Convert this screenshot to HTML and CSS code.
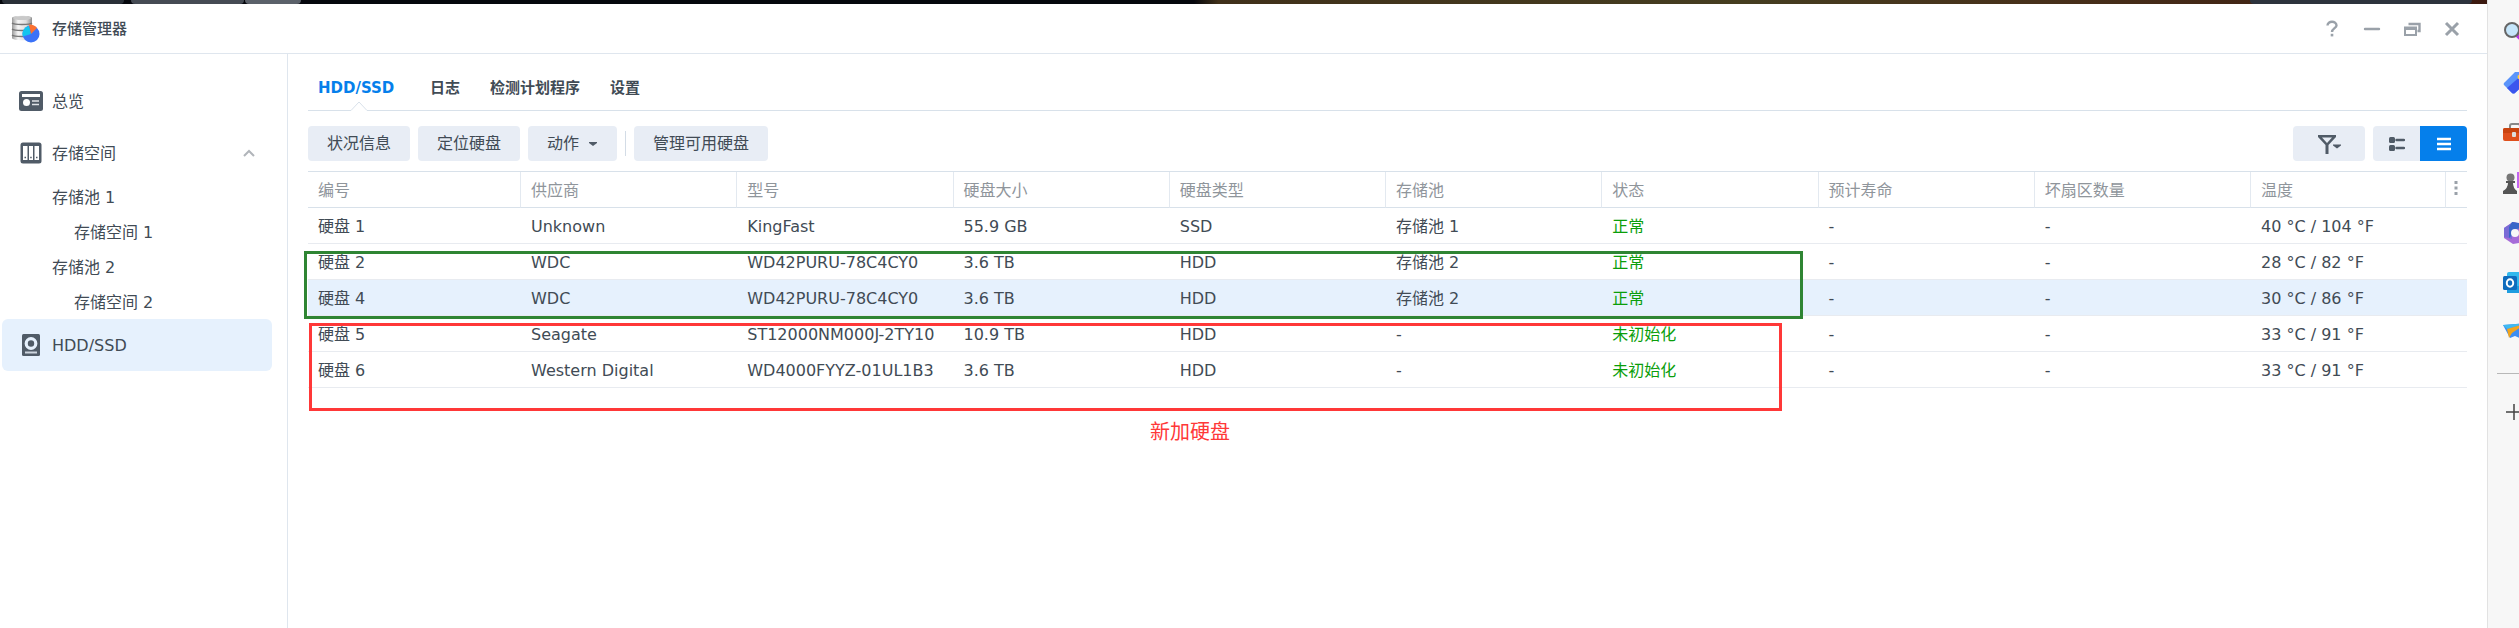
FILE: index.html
```html
<!DOCTYPE html>
<html lang="zh-CN">
<head>
    <meta charset="UTF-8">
    <meta name="viewport" content="width=device-width, initial-scale=1.0">
    <title>存储管理器</title>
    <link rel="stylesheet" href="styles.css">
</head>
<body>
    <div class="desktop">
        <div class="taskbar">
            <span class="task task-first"></span>
            <span class="task task-group"></span>
            <span class="task task-light"></span>
            <span class="taskbar-fill"></span>
            <span class="task task-widget"></span>
        </div>

        <div class="window">
            <header class="titlebar">
                <svg class="app-icon" width="30" height="30" viewBox="0 0 30 30">
                    <defs>
                        <linearGradient id="metal" x1="0" x2="1">
                            <stop offset="0" stop-color="#9a9a9a"/>
                            <stop offset=".3" stop-color="#f5f5f5"/>
                            <stop offset=".7" stop-color="#dedede"/>
                            <stop offset="1" stop-color="#8e8e8e"/>
                        </linearGradient>
                    </defs>
                    <path d="M1 4c0-3 20-3 20 0v20c0 3-20 3-20 0z" fill="url(#metal)"/>
                    <ellipse cx="11" cy="4" rx="9" ry="2" fill="#c9c9c9"/>
                    <path d="M1 9c2 2 18 2 20 0M1 15c2 2 18 2 20 0M1 21c2 2 18 2 20 0" fill="none" stroke="#777" stroke-width="1.3"/>
                    <circle cx="20" cy="20" r="8.5" fill="#3a72f8"/>
                    <path d="M20 20L11.800 22.500A8.500 8.500 0 0 1 18 11.700z" fill="#12c5ee"/>
                    <path d="M20 20L18 10.500A9 9 0 0 1 26 14z" fill="#fb7130"/>
                </svg>
                <h1>存储管理器</h1>
                <div class="window-controls">
                    <button type="button" aria-label="帮助">
                        <svg width="18" height="18" viewBox="0 0 18 18"><path d="M4.500 5.500C4.500 .5 13.500 .5 13.500 5.500C13.500 8 9 8.500 9 12" fill="none" stroke="#9aa1a9" stroke-width="2.400"/><rect x="7.700" y="13.800" width="2.600" height="2.600" fill="#9aa1a9"/></svg>
                    </button>
                    <button type="button" aria-label="最小化">
                        <svg width="18" height="18" viewBox="0 0 18 18"><path d="M2 9h14" stroke="#9aa1a9" stroke-width="2.400" stroke-linecap="round"/></svg>
                    </button>
                    <button type="button" aria-label="还原">
                        <svg width="18" height="18" viewBox="0 0 18 18"><path d="M5.500 4h11v7h-2" fill="none" stroke="#9aa1a9" stroke-width="2.400"/><rect x="2" y="7.500" width="11" height="7.500" fill="none" stroke="#9aa1a9" stroke-width="2"/><path d="M1 8.500h13" stroke="#9aa1a9" stroke-width="3"/></svg>
                    </button>
                    <button type="button" aria-label="关闭">
                        <svg width="18" height="18" viewBox="0 0 18 18"><path d="M3 3l12 12M15 3L3 15" stroke="#9aa1a9" stroke-width="3"/></svg>
                    </button>
                </div>
            </header>

            <div class="window-body">
                <nav class="sidebar">
                    <a class="nav-item" href="#">
                        <svg width="24" height="24" viewBox="0 0 24 24"><rect x="0" y="2" width="24" height="20" rx="2.500" fill="#505b67"/><rect x="3" y="5" width="18" height="3" fill="#fff"/><circle cx="7.500" cy="13.500" r="3.500" fill="#fff"/><path d="M13 12h7M13 15.500h7" stroke="#dfe3e8" stroke-width="1.500"/></svg>
                        <span>总览</span>
                    </a>
                    <a class="nav-item" href="#">
                        <svg width="24" height="24" viewBox="0 0 24 24"><rect x="1.500" y="1.500" width="21" height="21" rx="2.500" fill="#505b67"/><path d="M4 5h4.500v14H4zM10 5h4v14h-4zM15.500 5H20v14h-4.500z" fill="#fff"/><path d="M5.500 16.500h1.500M11.200 16.500h1.500M17 16.500h1.500" stroke="#505b67" stroke-width="1.500"/></svg>
                        <span>存储空间</span>
                        <svg class="chevron" width="14" height="10" viewBox="0 0 14 10"><path d="M2 8l5-5 5 5" fill="none" stroke="#b1b5ba" stroke-width="2"/></svg>
                    </a>
                    <a class="nav-sub" href="#">存储池 1</a>
                    <a class="nav-sub nav-volume" href="#">存储空间 1</a>
                    <a class="nav-sub" href="#">存储池 2</a>
                    <a class="nav-sub nav-volume" href="#">存储空间 2</a>
                    <a class="nav-item selected" href="#">
                        <svg width="24" height="24" viewBox="0 0 24 24"><rect x="3" y="1" width="18" height="22" rx="1.500" fill="#505b67"/><circle cx="12" cy="10.500" r="4.800" fill="none" stroke="#e6f1fd" stroke-width="3.200"/><path d="M6 19.500h12" stroke="#cdd5de" stroke-width="2"/></svg>
                        <span>HDD/SSD</span>
                    </a>
                </nav>

                <main class="content">
                    <div class="tabs" role="tablist">
                        <button type="button" role="tab" class="tab active" aria-selected="true">HDD/SSD
                            <svg class="tab-arrow" width="20" height="11" viewBox="0 0 20 11"><path d="M2 10h16v1H2z" fill="#fff"/><path d="M1 10.500h1L10 2l8 8.500h1" fill="#fff" stroke="#d8e1ea"/></svg>
                        </button>
                        <button type="button" role="tab" class="tab">日志</button>
                        <button type="button" role="tab" class="tab">检测计划程序</button>
                        <button type="button" role="tab" class="tab">设置</button>
                    </div>

                    <div class="toolbar">
                        <button type="button" class="btn">状况信息</button>
                        <button type="button" class="btn">定位硬盘</button>
                        <button type="button" class="btn">动作
                            <svg width="10" height="6" viewBox="0 0 10 6"><path d="M1 1h8v1L5 5 1 2z" fill="#505b67"/></svg>
                        </button>
                        <span class="divider"></span>
                        <button type="button" class="btn">管理可用硬盘</button>

                        <button type="button" class="btn filter" aria-label="筛选">
                            <svg width="24" height="22" viewBox="0 0 24 22"><path d="M1 2h18v2l-7.500 8v9h-3v-9L1 4z" fill="#505b67"/><path d="M5 4.500h10l-5 5.500z" fill="#e8edf5"/><path d="M16 11.500h8v1l-4 3-4-3z" fill="#505b67"/></svg>
                        </button>
                        <div class="view-switch">
                            <button type="button" aria-label="卡片视图">
                                <svg width="16" height="14" viewBox="0 0 16 14"><rect x="0" y="0" width="6" height="6" rx="1.500" fill="#505b67"/><rect x="0" y="8" width="6" height="6" rx="1.500" fill="#505b67"/><path d="M7.500 3h7.500M7.500 11h7.500" stroke="#505b67" stroke-width="2.400" stroke-linecap="round"/></svg>
                            </button>
                            <button type="button" class="on" aria-label="列表视图">
                                <svg width="16" height="14" viewBox="0 0 16 14"><path d="M1 2h14M1 7h14M1 12h14" stroke="#fff" stroke-width="2.400"/></svg>
                            </button>
                        </div>
                    </div>

                    <div class="disk-list">
                        <table>
                            <colgroup>
                                <col class="col-id">
                                <col><col><col><col><col><col><col><col>
                                <col class="col-temp">
                                <col class="col-menu">
                            </colgroup>
                            <thead>
                                <tr>
                                    <th>编号</th>
                                    <th>供应商</th>
                                    <th>型号</th>
                                    <th>硬盘大小</th>
                                    <th>硬盘类型</th>
                                    <th>存储池</th>
                                    <th>状态</th>
                                    <th>预计寿命</th>
                                    <th>坏扇区数量</th>
                                    <th>温度</th>
                                    <th class="menu-cell">
                                        <button type="button" aria-label="列设置">
                                            <svg width="4" height="14" viewBox="0 0 4 14"><path d="M.5 0h3v3h-3zM.5 5.500h3v3h-3zM.5 11h3v3h-3z" fill="#9aa1a9"/></svg>
                                        </button>
                                    </th>
                                </tr>
                            </thead>
                            <tbody>
                                <tr>
                                    <td>硬盘 1</td><td>Unknown</td><td>KingFast</td><td>55.9 GB</td><td>SSD</td><td>存储池 1</td>
                                    <td class="status">正常</td><td>-</td><td>-</td><td colspan="2">40 °C / 104 °F</td>
                                </tr>
                                <tr>
                                    <td>硬盘 2</td><td>WDC</td><td>WD42PURU-78C4CY0</td><td>3.6 TB</td><td>HDD</td><td>存储池 2</td>
                                    <td class="status">正常</td><td>-</td><td>-</td><td colspan="2">28 °C / 82 °F</td>
                                </tr>
                                <tr class="selected">
                                    <td>硬盘 4</td><td>WDC</td><td>WD42PURU-78C4CY0</td><td>3.6 TB</td><td>HDD</td><td>存储池 2</td>
                                    <td class="status">正常</td><td>-</td><td>-</td><td colspan="2">30 °C / 86 °F</td>
                                </tr>
                                <tr>
                                    <td>硬盘 5</td><td>Seagate</td><td>ST12000NM000J-2TY10</td><td>10.9 TB</td><td>HDD</td><td>-</td>
                                    <td class="status">未初始化</td><td>-</td><td>-</td><td colspan="2">33 °C / 91 °F</td>
                                </tr>
                                <tr>
                                    <td>硬盘 6</td><td>Western Digital</td><td>WD4000FYYZ-01UL1B3</td><td>3.6 TB</td><td>HDD</td><td>-</td>
                                    <td class="status">未初始化</td><td>-</td><td>-</td><td colspan="2">33 °C / 91 °F</td>
                                </tr>
                            </tbody>
                        </table>

                        <!-- Markup drawn over the list -->
                        <div class="mark mark-green"></div>
                        <div class="mark mark-red"></div>
                        <p class="mark-label">新加硬盘</p>
                    </div>
                </main>
            </div>
        </div>
    </div>

    <aside class="browser-bar">
        <svg class="tool" viewBox="0 0 24 24"><path d="M15 15l6 6" stroke="#b935e8" stroke-width="4" stroke-linecap="round"/><circle cx="9" cy="9" r="7" fill="#c6e6fb" stroke="#666" stroke-width="2"/></svg>
        <svg class="tool" viewBox="0 0 24 24"><path d="M2 11L12 1h9q2 0 2 2v9L12 22q-1.500 1-3 0l-8-8q-1-1.500 1-3z" fill="#5a94fa"/><path d="M4 17L20 3l3 9-11 10q-1.500 1-3 0z" fill="#3b55ee"/><circle cx="17" cy="6" r="2.500" fill="#ffd02e"/></svg>
        <svg class="tool" viewBox="0 0 24 24"><path d="M7 8V5q0-2 2-2h6q2 0 2 2v3" fill="none" stroke="#888" stroke-width="2"/><rect y="7" width="24" height="13" rx="2" fill="#df4f1c"/><path d="M0 9q0-2 2-2h20q2 0 2 2v3H0z" fill="#c9430f"/><rect x="9" y="11" width="4" height="5" rx="1" fill="#ddd"/></svg>
        <svg class="tool" viewBox="0 0 24 24"><path d="M14 1h9v16h-9z" fill="#c163f2"/><circle cx="7.500" cy="6.500" r="4" fill="#777"/><path d="M3 10h9v2h-2q0 5 4 8v3H0v-3q5-3 5-8H3z" fill="#555"/></svg>
        <svg class="tool" viewBox="0 0 24 24"><path d="M10 1l10 2 3 9-7 10-6 1-9-6V7z" fill="#a66bd8"/><path d="M10 1l7 2v5L9 9v9l-8-2V7z" fill="#7a6bd6"/><path d="M9 1l8 1v5l-7 2-1 5-3 3V6z" fill="#3a66c8"/><circle cx="12" cy="12" r="4" fill="#f7f7f7"/></svg>
        <svg class="tool" viewBox="0 0 24 24"><rect x="4" y="1" width="20" height="21" rx="2" fill="#32b8ed"/><path d="M4 15h20v7H4z" fill="#1e9de0"/><rect y="5" width="14" height="14" rx="1.500" fill="#0f6cbd"/><ellipse cx="7" cy="12" rx="3.200" ry="3.700" fill="none" stroke="#fff" stroke-width="2"/></svg>
        <svg class="tool" viewBox="0 0 24 24"><path d="M0 4l24-2-5 16-7-3-5 2z" fill="#3d8df2"/><path d="M0 4l24-2L4 8z" fill="#3fbaf0"/><path d="M4 8L24 2 9 12l-3 5z" fill="#f3a51c"/></svg>
        <hr>
        <button type="button" aria-label="添加">
            <svg width="16" height="16" viewBox="0 0 16 16"><path d="M0 8h16M8 0v16" stroke="#444" stroke-width="1.500"/></svg>
        </button>
    </aside>
</body>
</html>
```

FILE: styles.css
```css
* {
    box-sizing: border-box;
}
body {
    margin: 0;
    display: flex;
    min-height: 100vh;
    font-family: "DejaVu Sans", "Noto Sans CJK SC", sans-serif;
    font-size: 16px;
    line-height: 20px;
    color: #414b55;
    background: #fff;
    overflow: hidden;
}
button {
    font: inherit;
    color: inherit;
    border: 0;
    padding: 0;
    background: none;
    cursor: pointer;
}
a {
    color: inherit;
    text-decoration: none;
}
svg {
    display: block;
    flex: none;
}
.desktop {
    flex: 1;
    min-width: 0;
    display: flex;
    flex-direction: column;
}

/* Desktop taskbar above the window */
.taskbar {
    height: 4px;
    display: flex;
    gap: 7px;
    padding: 0 15px 0 2px;
    background: linear-gradient(90deg, #05070d 48%, #40301a 49%, #453d20 70%, #47301a 82%, #3c1a10);
}
.task {
    height: 4px;
    border-radius: 0 0 4px 4px;
    background: #2a3038;
}
.task-first {
    width: 122px;
}
.task-group {
    width: 113px;
    background: #454b54;
}
.task-light {
    width: 56px;
    margin-left: -6px;
    background: #5b616a;
}
.taskbar-fill {
    flex: 1;
}
.task-widget {
    width: 222px;
    background: #2d333d;
}

.window {
    flex: 1;
    display: flex;
    flex-direction: column;
    background: #fff;
}
.titlebar {
    height: 50px;
    display: flex;
    align-items: center;
    gap: 11px;
    padding: 0 26px 0 11px;
    border-bottom: 1px solid #dfe6ee;
}
.titlebar h1 {
    margin: 0;
    font-size: 15px;
    font-weight: 500;
}
.window-controls {
    margin-left: auto;
    display: flex;
    gap: 22px;
}
.window-body {
    flex: 1;
    display: flex;
}

/* Sidebar */
.sidebar {
    width: 288px;
    flex: none;
    padding: 21px 15px 0 2px;
    border-right: 1px solid #dfe6ee;
}
.nav-item {
    height: 52px;
    display: flex;
    align-items: center;
    gap: 9px;
    padding: 0 16px 0 17px;
    border-radius: 6px;
}
.nav-item.selected {
    background: #e6f1fd;
}
.nav-item span {
    padding-top: 1px;
}
.chevron {
    margin-left: auto;
}
.nav-sub {
    display: block;
    height: 35px;
    padding-left: 50px;
    line-height: 37px;
}
.nav-volume {
    padding-left: 72px;
}

/* Content */
.content {
    flex: 1;
    min-width: 0;
    padding: 0 20px;
}
.tabs {
    height: 57px;
    display: flex;
    gap: 30px;
    padding: 12px 10px 0;
    border-bottom: 1px solid #d8e1ea;
}
.tab {
    position: relative;
    font-size: 15px;
    font-weight: bold;
}
.tab.active {
    min-width: 82px;
    text-align: left;
    color: #057feb;
}
.tab-arrow {
    position: absolute;
    left: 31px;
    bottom: -1px;
}
.toolbar {
    display: flex;
    align-items: center;
    gap: 8px;
    padding: 15px 0 10px;
}
.btn {
    height: 35px;
    display: flex;
    align-items: center;
    justify-content: center;
    gap: 9px;
    padding: 0 19px;
    border-radius: 4px;
    background: #e8edf5;
}
.divider {
    width: 1px;
    height: 25px;
    background: #d3dce6;
}
.filter {
    width: 72px;
    margin-left: auto;
}
.view-switch {
    display: flex;
    border-radius: 4px;
    overflow: hidden;
}
.view-switch button {
    width: 47px;
    height: 35px;
    display: flex;
    align-items: center;
    justify-content: center;
    background: #e8edf5;
}
.view-switch .on {
    background: #057feb;
}

/* Disk list */
.disk-list {
    position: relative;
}
table {
    width: 100%;
    table-layout: fixed;
    border-collapse: separate;
    border-spacing: 0;
    border-top: 1px solid #d8e1ea;
}
.col-id {
    width: 213px;
}
.col-temp {
    width: 195px;
}
.col-menu {
    width: 21px;
}
th,
td {
    height: 36px;
    padding: 2px 10px 0;
    text-align: left;
    white-space: nowrap;
    border-bottom: 1px solid #e8ebf0;
}
th {
    font-weight: normal;
    color: #8f959b;
    border-right: 1px solid #e3e9f0;
    border-bottom-color: #d8e1ea;
}
.menu-cell {
    padding: 0 8px;
    border-right: 0;
}
tr.selected td {
    background: #e6f1fd;
}
.status {
    color: #0a9e0a;
}

.mark {
    position: absolute;
    border: 3px solid #2f8533;
}
.mark-green {
    top: 80px;
    left: -4px;
    right: 664px;
    height: 68px;
}
.mark-red {
    top: 152px;
    left: 1px;
    right: 685px;
    height: 88px;
    border-color: #ff3838;
}
.mark-label {
    position: absolute;
    top: 247px;
    left: 842px;
    margin: 0;
    font-size: 20px;
    line-height: 28px;
    color: #ff3838;
}

/* Browser side bar, cut off by the window edge */
.browser-bar {
    width: 32px;
    flex: none;
    display: flex;
    flex-direction: column;
    gap: 26px;
    padding: 21px 0 0 15px;
    border-left: 1px solid #e2e2e2;
    background: #f7f7f7;
}
.tool {
    width: 24px;
    height: 24px;
}
.browser-bar hr {
    width: 24px;
    margin: 2px 0 4px -6px;
    border: 0;
    border-top: 1px solid #b8b8b8;
}
.browser-bar button {
    padding-left: 3px;
}
```
